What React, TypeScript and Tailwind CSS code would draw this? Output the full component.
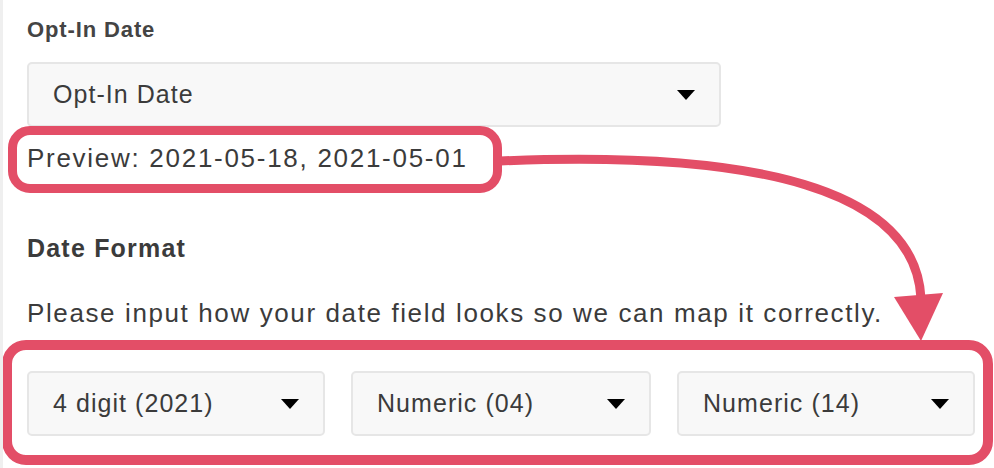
import React from "react";

const font = { fontFamily: '"Liberation Sans", Arial, sans-serif' };

function Caret() {
  return (
    <svg width="18" height="10" viewBox="0 0 18 10" className="shrink-0">
      <polygon points="0,0 18,0 9,10" fill="#000" />
    </svg>
  );
}

function Select({ label, className }: { label: string; className: string }) {
  return (
    <div
      className={`flex items-center justify-between h-[65px] rounded-[5px] border-2 border-[#e6e6e6] bg-[#f8f8f8] pl-[24px] pr-[24px] text-[25px] tracking-[0.042em] text-[#3b3b3b] ${className}`}
    >
      <span>{label}</span>
      <Caret />
    </div>
  );
}

export default function App() {
  return (
    <div
      className="relative w-[994px] h-[468px] bg-white overflow-hidden border-l-[3px] border-[#efefef]"
      style={font}
    >
      <div className="flex flex-col pl-[24px] pt-[17px]">
        <div className="text-[22px] leading-[26px] font-bold text-[#444] tracking-[0.04em]">
          Opt-In Date
        </div>
        <Select label="Opt-In Date" className="w-[694px] mt-[19px]" />
        <div className="mt-[16px] text-[26px] leading-[30px] tracking-[0.066em] text-[#3b3b3b]">
          Preview: 2021-05-18, 2021-05-01
        </div>
        <div className="mt-[60px] text-[25px] leading-[30px] font-bold tracking-[0.048em] text-[#3b3b3b]">
          Date Format
        </div>
        <div className="mt-[35px] text-[26px] leading-[30px] tracking-[0.062em] text-[#3b3b3b]">
          Please input how your date field looks so we can map it correctly.
        </div>
        <div className="mt-[43px] flex gap-[26px]">
          <Select label="4 digit (2021)" className="w-[298px]" />
          <Select label="Numeric (04)" className="w-[300px]" />
          <Select label="Numeric (14)" className="w-[298px]" />
        </div>
      </div>

      {/* annotation overlays */}
      <div className="absolute left-[5px] top-[126px] w-[494px] h-[67px] rounded-[22px] border-[9px] border-[#e34e67]" />
      <div className="absolute left-[-1px] top-[340px] w-[991px] h-[125px] rounded-[24px] border-[10px] border-[#e34e67]" />
      <svg
        className="absolute left-[-3px] top-0 pointer-events-none"
        width="994"
        height="468"
        viewBox="0 0 994 468"
      >
        <path
          d="M500 161 C 760 150, 915 190, 921 298"
          fill="none"
          stroke="#e34e67"
          strokeWidth="9"
        />
        <polygon points="894,297 943,293 921,341" fill="#e34e67" />
      </svg>
    </div>
  );
}
